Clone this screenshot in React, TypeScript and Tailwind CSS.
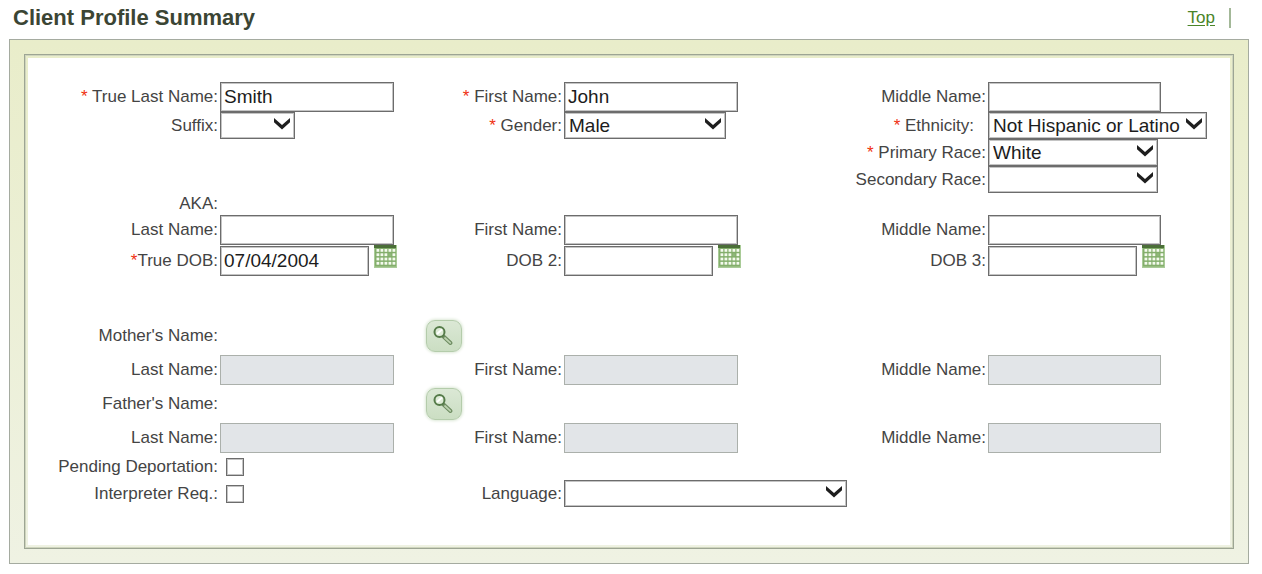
import { useState } from "react";
import type { ReactNode } from "react";

function Label({ htmlFor, required, tight, className = "pr-0.5", children }: {
  htmlFor?: string; required?: boolean; tight?: boolean; className?: string; children: ReactNode;
}) {
  const content = (
    <>
      {required && <span className="text-[#f03010]">{tight ? "*" : "* "}</span>}
      {children}
    </>
  );
  const style = `self-center justify-self-end whitespace-nowrap ${className}`;
  return htmlFor ? <label htmlFor={htmlFor} className={style}>{content}</label> : <span className={style}>{content}</span>;
}

function TextField({ id, value = "", disabled, className = "w-[174px]" }: {
  id: string; value?: string; disabled?: boolean; className?: string;
}) {
  const [text, setText] = useState(value);
  return (
    <input
      id={id}
      type="text"
      value={text}
      disabled={disabled}
      onChange={(e) => setText(e.target.value)}
      className={`h-[30px] border border-[#6c6c6c] bg-white pl-[3px] text-[19px] text-[#1c1c1c] shadow-[inset_0_0_0_1px_#c4c4c4] outline-none disabled:border-[#abb0ab] disabled:bg-[#e2e5e8] disabled:shadow-none ${className}`}
    />
  );
}

function SelectField({ id, options, className }: { id: string; options: string[]; className: string }) {
  return (
    <div className={`relative h-[27px] ${className}`}>
      <select id={id} className="h-full w-full appearance-none border border-[#6c6c6c] bg-white pl-1 text-[19px] leading-6 text-[#1c1c1c] shadow-[inset_0_0_0_1px_#c4c4c4] outline-none">
        {options.map((o) => <option key={o}>{o}</option>)}
      </select>
      <svg aria-hidden="true" viewBox="0 0 16 12" className="pointer-events-none absolute top-1.5 right-[5px] h-3 w-4">
        <path d="M0 0 L8 7 L16 0 V4.2 L8 11.6 L0 4.2 Z" fill="#1e1e1e" />
      </svg>
    </div>
  );
}

function CalendarIcon() {
  const cells = [0, 1, 2, 3, 4];
  const rows = [0, 1, 2, 3];
  return (
    <svg viewBox="0 0 23 23" aria-hidden="true" className="h-[23px] w-[23px]">
      <rect width="23" height="23" fill="#a9cb97" />
      <rect x="1" width="21" height="21.5" fill="#83ae6b" />
      <rect width="22" height="3" fill="#4b6f38" />
      {rows.map((r) => cells.map((c) => (
        <rect key={`${r}-${c}`} x={2.5 + c * 4} y={4 + r * 4.3} width="2.8" height="2.8" fill={r === 1 && c === 3 ? "#8fb87a" : "#f4faee"} />
      )))}
    </svg>
  );
}

function DateField({ id, value, name }: { id: string; value?: string; name: string }) {
  return (
    <div className="flex items-start gap-[5px]">
      <TextField id={id} value={value} className="mt-px w-[149px]" />
      <button type="button" aria-label={`Choose ${name}`}><CalendarIcon /></button>
    </div>
  );
}

function SearchButton({ name }: { name: string }) {
  return (
    <button type="button" aria-label={name} className="ml-1 flex h-8 w-9 items-center justify-center self-center rounded-[9px] border border-[#b4ccab] bg-linear-to-b from-[#dbe8d5] to-[#cbdec3] shadow-[0_0_3px_1px_#dce8d6]">
      <svg viewBox="0 0 22 22" className="h-[22px] w-[22px]" fill="none">
        <path d="M10.5 11.5 L17.5 18" stroke="#6d8b60" strokeWidth="4" strokeLinecap="round" />
        <path d="M12 13 L17.3 17.8" stroke="#bcd2b0" strokeWidth="1.8" strokeLinecap="round" />
        <circle cx="6.5" cy="7" r="5" fill="#dfecd8" stroke="#557b49" strokeWidth="2" />
        <path d="M4 9 L9 4.5" stroke="#fff" strokeWidth="1.8" />
      </svg>
    </button>
  );
}

function CheckField({ id }: { id: string }) {
  return <input id={id} type="checkbox" className="ml-1.5 h-[18px] w-[18px] appearance-none self-center border border-[#6c6c6c] bg-white shadow-[inset_0_0_0_1px_#c4c4c4] checked:bg-[#747474]" />;
}

function NameRow({ prefix, disabled }: { prefix: string; disabled?: boolean }) {
  return (
    <>
      <Label htmlFor={`${prefix}-last`}>Last Name:</Label>
      <TextField id={`${prefix}-last`} disabled={disabled} />
      <Label htmlFor={`${prefix}-first`}>First Name:</Label>
      <TextField id={`${prefix}-first`} disabled={disabled} />
      <Label htmlFor={`${prefix}-middle`}>Middle Name:</Label>
      <TextField id={`${prefix}-middle`} disabled={disabled} className="w-[173px]" />
    </>
  );
}

const row = "grid grid-cols-[minmax(0,192fr)_minmax(0,202fr)_minmax(0,142fr)_minmax(0,264fr)_minmax(0,160fr)_minmax(0,242fr)]";

export default function App() {
  return (
    <main id="top" className="min-h-screen bg-white pr-[13px] pb-2.5 pl-[9px] font-['Liberation_Sans',Arial,sans-serif] text-[17px] leading-5 text-[#444]">
      <header className="flex h-[39px] items-start justify-between pt-1.5 pr-[18px] pl-1">
        <h1 className="text-[22px] leading-6 font-bold text-[#3b4534]">Client Profile Summary</h1>
        <a href="#top" className="mt-0.5 border-r-2 border-[#a3b898] pr-3.5 text-[#4a8428] underline underline-offset-2">Top</a>
      </header>
      <section className="border border-[#a5aba0] bg-linear-to-b from-[#e9edca] to-[#eff2e3] p-3.5">
        <div className="border border-[#9da594] p-[3px] shadow-[inset_0_0_0_1px_#cfd5bd]">
          <form className="bg-white pt-6 pb-[38px]" onSubmit={(e) => e.preventDefault()}>
            <div className={row}>
              <Label htmlFor="last" required>True Last Name:</Label>
              <TextField id="last" value="Smith" />
              <Label htmlFor="first" required>First Name:</Label>
              <TextField id="first" value="John" />
              <Label htmlFor="middle">Middle Name:</Label>
              <TextField id="middle" className="w-[173px]" />
            </div>
            <div className={row}>
              <Label htmlFor="suffix">Suffix:</Label>
              <SelectField id="suffix" options={["", "Jr.", "Sr."]} className="w-[75px]" />
              <Label htmlFor="gender" required>Gender:</Label>
              <SelectField id="gender" options={["Male", "Female"]} className="w-[162px]" />
              <Label htmlFor="ethnicity" required className="pr-3.5">Ethnicity:</Label>
              <SelectField id="ethnicity" options={["Not Hispanic or Latino", "Hispanic or Latino"]} className="w-[219px]" />
            </div>
            <div className={row}>
              <Label htmlFor="race1" required className="col-start-5 pr-0.5">Primary Race:</Label>
              <SelectField id="race1" options={["White"]} className="w-[170px]" />
            </div>
            <div className={row}>
              <Label htmlFor="race2" className="col-start-5 pr-0.5">Secondary Race:</Label>
              <SelectField id="race2" options={["", "White"]} className="w-[170px]" />
            </div>
            <div className={`h-[22px] ${row}`}>
              <Label>AKA:</Label>
            </div>
            <div className={row}>
              <NameRow prefix="aka" />
            </div>
            <div className={row}>
              <Label htmlFor="dob1" required tight>True DOB:</Label>
              <DateField id="dob1" value="07/04/2004" name="true DOB" />
              <Label htmlFor="dob2">DOB 2:</Label>
              <DateField id="dob2" name="DOB 2" />
              <Label htmlFor="dob3">DOB 3:</Label>
              <DateField id="dob3" name="DOB 3" />
            </div>
            <div className={`mt-10 h-[39px] ${row}`}>
              <Label>Mother's Name:</Label>
              <span />
              <SearchButton name="Find mother" />
            </div>
            <div className={row}>
              <NameRow prefix="mother" disabled />
            </div>
            <div className={`h-[38px] ${row}`}>
              <Label>Father's Name:</Label>
              <span />
              <SearchButton name="Find father" />
            </div>
            <div className={row}>
              <NameRow prefix="father" disabled />
            </div>
            <div className={`h-[27px] ${row}`}>
              <Label htmlFor="deport">Pending Deportation:</Label>
              <CheckField id="deport" />
            </div>
            <div className={`h-[27px] ${row}`}>
              <Label htmlFor="interp">Interpreter Req.:</Label>
              <CheckField id="interp" />
              <Label htmlFor="language">Language:</Label>
              <div className="flex">
                <SelectField id="language" options={["", "English", "Spanish"]} className="w-[283px] shrink-0" />
              </div>
            </div>
          </form>
        </div>
      </section>
    </main>
  );
}
